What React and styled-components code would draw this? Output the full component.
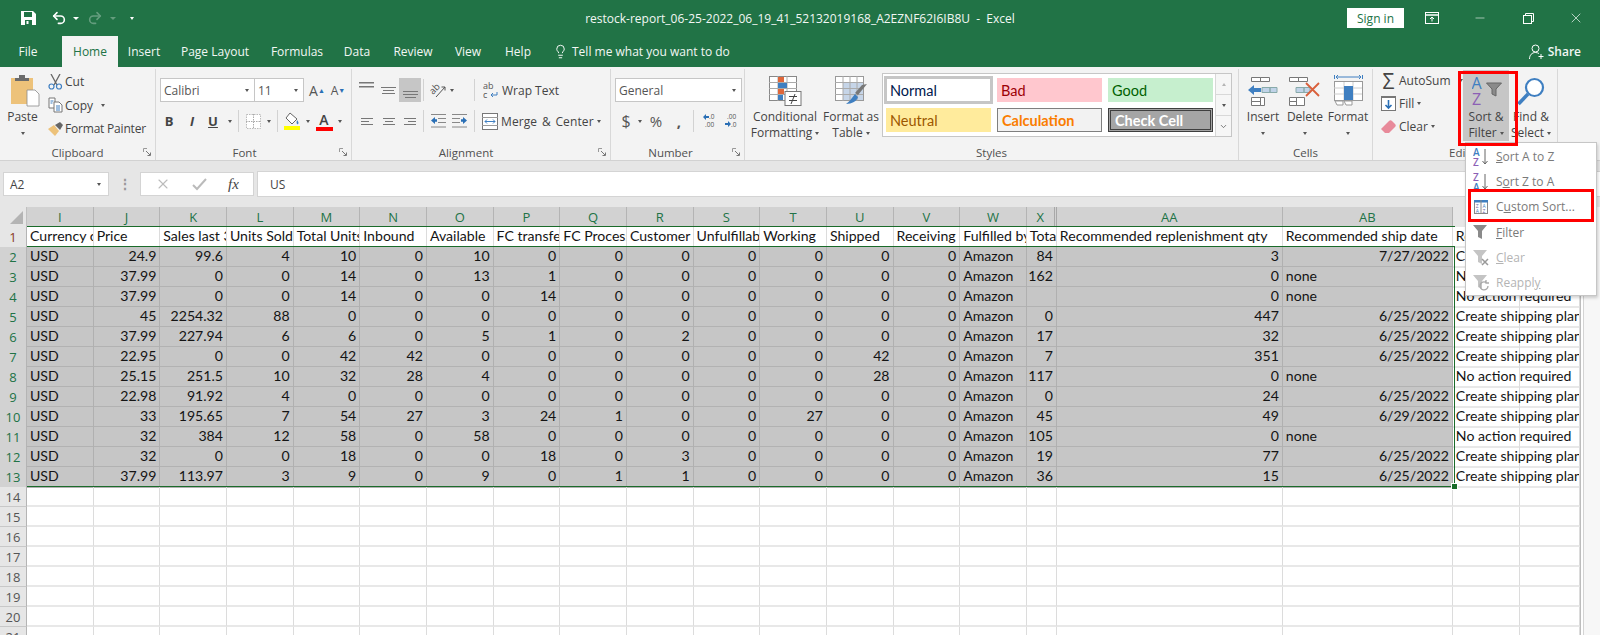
import React from "react";
import styled, { createGlobalStyle } from "styled-components";
import { Undo2, Redo2, Lightbulb, X, Minus, ChevronDown } from "lucide-react";

const UI_FONT = "'Open Sans', 'Noto Sans', sans-serif";
const CELL_FONT = "Lato, 'Open Sans', sans-serif";
const GREEN = "#217346";
const SELECT_GREEN = "#1a6b2a";

const GlobalStyle = createGlobalStyle`
  html, body { margin: 0; padding: 0; background: #fff; overflow: hidden; }
  body { font-family: ${UI_FONT}; }
`;

const Page = styled.div`
  position: relative;
  width: 1600px;
  height: 635px;
  overflow: hidden;
`;

/* title bar */
const TitleBar = styled.div`
  display: grid;
  grid-template-columns: 1fr auto 1fr;
  align-items: center;
  height: 36px;
  background: ${GREEN};
  color: #fff;
`;
const Qat = styled.div`
  display: flex;
  align-items: center;
  padding-left: 21px;
`;
const QatSlot = styled.div`
  display: flex;
  justify-content: center;
  align-items: center;
  width: ${(p) => p.$w}px;
  margin-left: ${(p) => p.$ml || 0}px;
  opacity: ${(p) => (p.$dim ? 0.3 : 1)};
`;
const DocTitle = styled.div`
  font-size: 12px;
  white-space: nowrap;
  color: #f2f7f4;
`;
const WindowControls = styled.div`
  display: flex;
  justify-content: flex-end;
  align-items: center;
`;
const SignIn = styled.div`
  display: flex;
  align-items: center;
  justify-content: center;
  width: 57px;
  height: 20px;
  background: #fff;
  color: ${GREEN};
  font-size: 12px;
`;
const WinButton = styled.div`
  display: flex;
  justify-content: center;
  width: 48px;
  margin-left: ${(p) => p.$ml || 0}px;
`;

/* tabs */
const TabBar = styled.div`
  display: flex;
  height: 31px;
  background: ${GREEN};
  color: #f2f7f4;
  font-size: 12px;
`;
const Tab = styled.div`
  display: flex;
  align-items: center;
  justify-content: center;
  width: ${(p) => p.$w}px;
  margin-left: ${(p) => p.$ml || 0}px;
  ${(p) => p.$active && `background: #f3f3f3; color: ${GREEN};`}
`;
const TellMe = styled.div`
  display: flex;
  align-items: center;
  gap: 4px;
  margin-left: 7px;
`;
const Share = styled.div`
  display: flex;
  align-items: center;
  gap: 3px;
  margin-left: auto;
  padding-right: 19px;
  font-weight: 600;
  font-size: 12px;
`;

/* ribbon */
const Ribbon = styled.div`
  display: flex;
  height: 93px;
  background: #f3f3f3;
  border-bottom: 1px solid #d2d2d2;
  box-sizing: content-box;
  color: #444;
  font-size: 12px;
`;
const Group = styled.div`
  position: relative;
  display: flex;
  flex-direction: column;
  width: ${(p) => p.$w}px;
  height: 91px;
  margin-top: 2px;
  border-right: 1px solid #d8d8d8;
  box-sizing: border-box;
`;
const GroupBody = styled.div`
  flex: 1;
  display: flex;
  padding-left: ${(p) => p.$pl || 0}px;
  margin-top: -2px;
`;
const GroupLabel = styled.div`
  display: flex;
  align-items: center;
  justify-content: ${(p) => (p.$pl ? "flex-start" : "center")};
  height: 16px;
  padding-left: ${(p) => p.$pl || 0}px;
  padding-right: ${(p) => p.$pr || 0}px;
  font-size: 11.5px;
  color: #505050;
`;
const Launcher = styled.svg`
  position: absolute;
  right: 3px;
  bottom: 3px;
  width: 9px;
  height: 9px;
`;
const LargeButton = styled.div`
  display: flex;
  flex-direction: column;
  align-items: center;
  width: ${(p) => p.$w}px;
  height: 71px;
  margin-top: 3px;
  margin-left: ${(p) => p.$ml || 0}px;
  padding-top: 3px;
  box-sizing: border-box;
  line-height: 16px;
  white-space: nowrap;
  background: ${(p) => (p.$active ? "#c6c6c6" : "transparent")};
`;
const LargeIcon = styled.div`
  display: flex;
  align-items: center;
  justify-content: center;
  height: 36px;
  padding-left: ${(p) => p.$pl || 0}px;
`;
const Caret = styled.span`
  display: inline-block;
  flex: none;
  width: 0;
  height: 0;
  margin-left: ${(p) => p.$ml ?? 3}px;
  vertical-align: middle;
  border-left: ${(p) => (p.$big ? 3.5 : 2.5)}px solid transparent;
  border-right: ${(p) => (p.$big ? 3.5 : 2.5)}px solid transparent;
  border-top: ${(p) => (p.$big ? 3.5 : 3)}px solid ${(p) => p.$color || "#555"};
  transform: ${(p) => (p.$up ? "rotate(180deg)" : "none")};
  opacity: ${(p) => (p.$up ? 0.4 : 1)};
`;
const CaretLine = styled.div`
  display: flex;
  align-items: center;
  height: 16px;
`;
const SmallColumn = styled.div`
  display: flex;
  flex-direction: column;
  width: ${(p) => p.$w}px;
  padding-top: ${(p) => p.$pt || 0}px;
  padding-left: ${(p) => p.$pl || 0}px;
  box-sizing: border-box;
`;
const SmallItem = styled.div`
  display: flex;
  align-items: center;
  height: ${(p) => p.$h || 23.5}px;
  white-space: nowrap;
  letter-spacing: ${(p) => (p.$tight ? "-0.2px" : "0")};
`;
const ItemIcon = styled.div`
  display: flex;
  justify-content: center;
  align-items: center;
  width: ${(p) => p.$w || 16}px;
  margin-right: ${(p) => p.$mr ?? 2}px;
`;
const ToolRows = styled.div`
  display: flex;
  flex-direction: column;
  gap: 7px;
  padding-top: 11px;
`;
const ToolRow = styled.div`
  display: flex;
  align-items: center;
  height: 24px;
`;
const Slot = styled.div`
  display: flex;
  flex-direction: ${(p) => (p.$stack ? "column" : "row")};
  align-items: ${(p) => (p.$stack ? "center" : p.$valign || "center")};
  justify-content: ${(p) => (p.$left ? "flex-start" : "center")};
  flex: none;
  width: ${(p) => p.$w}px;
  height: 24px;
  padding: ${(p) => (p.$valign === "flex-start" ? "4px 0 0" : p.$valign === "flex-end" ? "0 0 4px" : "0")};
  box-sizing: border-box;
  margin-left: ${(p) => p.$ml || 0}px;
  white-space: nowrap;
  word-spacing: ${(p) => (p.$spread ? "1.5px" : "0")};
  letter-spacing: ${(p) => (p.$spread ? "0.1px" : "0")};
  background: ${(p) => (p.$on ? "#c6c6c6" : "transparent")};
`;
const Divider = styled.div`
  flex: none;
  width: 1px;
  height: 22px;
  margin-left: ${(p) => p.$ml || 0}px;
  background: #d2d2d2;
`;
const SelectBox = styled.div`
  display: flex;
  align-items: center;
  justify-content: space-between;
  flex: none;
  width: ${(p) => p.$w}px;
  height: 24px;
  padding: 0 5px 0 3px;
  box-sizing: border-box;
  background: #fff;
  border: 1px solid #c6c6c6;
  margin-left: ${(p) => p.$ml || 0}px;
  color: #555;
  font-size: 12px;
`;
const Glyph = styled.span`
  font-size: ${(p) => p.$size || 13}px;
  line-height: ${(p) => (p.$lh ? p.$lh + "px" : "normal")};
  color: ${(p) => p.$color || "#444"};
  font-weight: ${(p) => p.$weight || 400};
  font-style: ${(p) => (p.$italic ? "italic" : "normal")};
  text-decoration: ${(p) => (p.$under ? "underline" : "none")};
  font-family: ${(p) => (p.$serif ? "'Liberation Serif', serif" : UI_FONT)};
`;

/* style gallery */
const Gallery = styled.div`
  display: flex;
  width: 350px;
  height: 64px;
  margin: 6px 0 0 5px;
  background: #fff;
  border: 1px solid #c6c6c6;
  box-sizing: border-box;
`;
const ChipGrid = styled.div`
  display: grid;
  grid-template-columns: repeat(3, 105px);
  grid-template-rows: repeat(2, 24px);
  gap: 6px;
  padding: 4px 0 0 3px;
`;
const CHIP = {
  normal: "background:#fff;color:#00184d;outline:3px solid #c6c6c6;outline-offset:-1px;",
  bad: "background:#ffc7ce;color:#9c0006;",
  good: "background:#c6efce;color:#006100;",
  neutral: "background:#ffeb9c;color:#9c5700;",
  calc: "background:#f2f2f2;color:#fa7d00;font-weight:700;border:1px solid #7f7f7f;",
  check: "background:#a5a5a5;color:#fff;font-weight:700;border:3px double #3f3f3f;",
};
const Chip = styled.div`
  display: flex;
  align-items: center;
  padding-left: 4px;
  box-sizing: border-box;
  font-family: ${CELL_FONT};
  font-size: 14.5px;
  white-space: nowrap;
  ${(p) => CHIP[p.$kind]}
`;
const GalleryScroll = styled.div`
  display: flex;
  flex-direction: column;
  width: 15px;
  margin-left: auto;
  border-left: 1px solid #d8d8d8;
  background: #f6f6f6;
`;
const ScrollStep = styled.div`
  flex: 1;
  display: flex;
  align-items: center;
  justify-content: center;
  border-bottom: 1px solid #d8d8d8;
  &:last-child { border-bottom: 0; }
`;

/* formula bar */
const FormulaBar = styled.div`
  display: flex;
  align-items: center;
  height: 46px;
  padding: 0 0 0 3px;
  background: #e6e6e6;
  box-sizing: border-box;
  color: #444;
`;
const NameBox = styled.div`
  display: flex;
  align-items: center;
  justify-content: space-between;
  width: 106px;
  height: 24px;
  padding: 0 7px 0 6px;
  box-sizing: border-box;
  background: #fff;
  border: 1px solid #d4d4d4;
  font-size: 12px;
`;
const GripDots = styled.div`
  width: 31px;
  text-align: center;
  color: #999;
  font-size: 14px;
  font-weight: 700;
  line-height: 1;
`;
const FxBox = styled.div`
  display: flex;
  align-items: center;
  justify-content: space-around;
  width: 114px;
  height: 24px;
  padding: 0 4px;
  box-sizing: border-box;
  background: #fff;
  border: 1px solid #d4d4d4;
`;
const FormulaInput = styled.div`
  flex: 1;
  display: flex;
  align-items: center;
  height: 24px;
  margin-left: 3px;
  padding-left: 12px;
  background: #fff;
  border: 1px solid #d4d4d4;
  border-right: 0;
  font-size: 12px;
`;

/* sheet */
const SheetArea = styled.div`
  display: flex;
  height: 429px;
  overflow: hidden;
`;
const SheetGrid = styled.div`
  position: relative;
  width: 1580px;
  flex: none;
  overflow: hidden;
`;
const COLUMNS = "27px repeat(15, 66.667px) 30px 226px 170px 67px 60px";
const SheetRow = styled.div`
  display: grid;
  grid-template-columns: ${COLUMNS};
  height: 20px;
  box-sizing: border-box;
`;
const ColHead = styled.div`
  display: flex;
  align-items: center;
  justify-content: center;
  box-sizing: border-box;
  font-size: 13px;
  background: ${(p) => (p.$sel ? "#d2d2d2" : "#e6e6e6")};
  color: ${(p) => (p.$sel ? GREEN : "#555")};
  border-right: ${(p) => (p.$hiddenNext ? "3px double #a8a8a8" : "1px solid " + (p.$sel ? "#b4b4b4" : "#c8c8c8"))};
`;
const CornerHead = styled.div`
  display: flex;
  align-items: flex-end;
  justify-content: flex-end;
  padding: 0 3px 3px 0;
  box-sizing: border-box;
  background: #e6e6e6;
  border-right: 1px solid #c0c0c0;
`;
const RowHead = styled.div`
  display: flex;
  align-items: center;
  justify-content: center;
  font-size: 13px;
  box-sizing: border-box;
  background: ${(p) => (p.$sel ? "#d2d2d2" : "#e6e6e6")};
  color: ${(p) => (p.$sel ? GREEN : p.$first ? "#8a3a1a" : "#555")};
  border-bottom: 1px solid ${(p) => (p.$sel ? "#b4b4b4" : "#c8c8c8")};
  border-right: 1px solid #b4b4b4;
`;
const Cell = styled.div`
  display: flex;
  align-items: center;
  justify-content: ${(p) => (p.$right ? "flex-end" : "flex-start")};
  padding: 0 3px 2px;
  box-sizing: border-box;
  min-width: 0;
  font-family: ${CELL_FONT};
  font-size: 14.1px;
  color: #141414;
  white-space: nowrap;
  overflow: ${(p) => (p.$spill ? "visible" : "hidden")};
  background: ${(p) => (p.$sel ? "#c6c6c6" : "transparent")};
  border-right: 1px solid ${(p) => (p.$sel ? "#b0b0b0" : "#dcdcdc")};
  border-bottom: 2px solid ${(p) => (p.$sel ? "#b2b2b2" : "#e8e8e8")};
`;
const HeaderOutline = styled.div`
  position: absolute;
  left: 27px;
  top: 19px;
  width: 1428px;
  height: 21px;
  border-top: 1.5px solid ${SELECT_GREEN};
  border-bottom: 1.5px solid ${SELECT_GREEN};
  box-sizing: border-box;
  pointer-events: none;
`;
const SelectionOutline = styled.div`
  position: absolute;
  left: 27px;
  top: 39px;
  width: 1428px;
  height: 241px;
  border-right: 1.5px solid ${SELECT_GREEN};
  border-bottom: 1.5px solid ${SELECT_GREEN};
  box-sizing: border-box;
  pointer-events: none;
`;
const FillHandle = styled.div`
  position: absolute;
  left: 1451px;
  top: 276px;
  width: 5px;
  height: 5px;
  background: ${SELECT_GREEN};
  border: 1px solid #fff;
  box-sizing: content-box;
`;
const Gutter = styled.div`
  flex: 1;
  background: #f7f7f7;
  border-left: 1px solid #bdbdbd;
  box-shadow: inset 2px 0 0 #fff, inset 3px 0 0 #d4d4d4;
`;

/* dropdown */
const Menu = styled.div`
  position: absolute;
  left: 1465px;
  top: 142px;
  width: 132px;
  height: 154px;
  padding-top: 1px;
  box-sizing: border-box;
  background: #fff;
  border: 1px solid #c6c6c6;
  box-shadow: 1px 2px 3px rgba(0,0,0,.18);
`;
const MenuItem = styled.div`
  display: flex;
  align-items: center;
  height: 25.2px;
  font-size: 12px;
  color: ${(p) => (p.$off ? "#b4b4b4" : "#7a7a7a")};
`;
const MenuIcon = styled.div`
  display: flex;
  justify-content: center;
  width: 30px;
  flex: none;
`;
const Mnemonic = styled.span`
  text-decoration: underline;
`;
const RedBox = styled.div`
  position: absolute;
  left: ${(p) => p.$x}px;
  top: ${(p) => p.$y}px;
  width: ${(p) => p.$w}px;
  height: ${(p) => p.$h}px;
  border: 3px solid #f00;
  box-sizing: border-box;
  pointer-events: none;
`;

/* drawings */
const SaveIcon = () => (
  <svg width="15" height="14" viewBox="0 0 15 14">
    <path d="M0 0h12l3 3v11H0z" fill="#fff" />
    <rect x="3" y="1" width="8" height="5" fill={GREEN} />
    <rect x="4" y="9" width="7" height="5" fill={GREEN} />
    <rect x="5.5" y="10" width="2" height="3" fill="#fff" />
  </svg>
);
const PasteIcon = () => (
  <svg width="29" height="32" viewBox="0 0 29 32">
    <rect x="0" y="3" width="22" height="26" fill="#edc27a" />
    <path d="M4 6V3h4V0h6v3h4v3z" fill="#6b6b6b" />
    <path d="M16 15h8l4 4v12H16z" fill="#fff" stroke="#8a8a8a" strokeWidth=".8" />
  </svg>
);
const CutIcon = () => (
  <svg width="15" height="16" viewBox="0 0 15 16">
    <path d="M3 0l6 11M12 0L6 11" stroke="#666" strokeWidth="1.3" fill="none" />
    <circle cx="3.5" cy="12.5" r="2.5" fill="none" stroke="#3f7fc1" strokeWidth="1.2" />
    <circle cx="11" cy="12.5" r="2.5" fill="none" stroke="#3f7fc1" strokeWidth="1.2" />
  </svg>
);
const CopyIcon = () => (
  <svg width="15" height="16" viewBox="0 0 15 16">
    <path d="M1 1h6v10H1z" fill="#fff" stroke="#777" />
    <path d="M6 5h5l3 3v7H6z" fill="#fff" stroke="#777" />
    <path d="M2.5 4h3M2.5 6h2M8 9h4M8 11h4M8 13h4" stroke="#3f7fc1" />
  </svg>
);
const PainterIcon = () => (
  <svg width="15" height="14" viewBox="0 0 15 14">
    <path d="M0 7l6-4 5 6-4 5z" fill="#edc27a" />
    <path d="M7 3l5-3 3 3-3 5z" fill="#666" />
  </svg>
);
const Launch = () => (
  <Launcher viewBox="0 0 9 9">
    <path d="M.5 4V.5H4" fill="none" stroke="#999" />
    <path d="M3 3l4 4M7.5 4.5v3h-3" fill="none" stroke="#777" />
  </Launcher>
);
const Lines = ({ w, dy = 3, n = 3, align = "left", width = 15, color = "#777", thick = 1 }) => (
  <svg width={width} height={dy * (n - 1) + thick} viewBox={`0 0 ${width} ${dy * (n - 1) + thick}`}>
    {Array.from({ length: n }, (_, i) => {
      const len = w[i % w.length];
      const x0 = align === "left" ? 0 : align === "right" ? width - len : (width - len) / 2;
      return <rect key={i} x={x0} y={i * dy} width={len} height={thick} fill={color} />;
    })}
  </svg>
);
const BorderIcon = () => (
  <svg width="15" height="15" viewBox="0 0 15 15">
    <rect x=".5" y=".5" width="14" height="14" fill="#fff" stroke="#bbb" strokeDasharray="1.5 1" />
    <path d="M7.5 0v15M0 7.5h15" stroke="#aaa" strokeDasharray="1.5 1" />
  </svg>
);
const FillIcon = () => (
  <svg width="17" height="18" viewBox="0 0 17 18">
    <path d="M6 1l7 6-5 5-6-6z" fill="#fff" stroke="#666" />
    <path d="M13 8c1.500 2 2 3 1 4s-2-1-1-4z" fill="#3f7fc1" />
    <rect x="0" y="14" width="16" height="4" fill="#ff0" />
  </svg>
);
const OrientIcon = () => (
  <svg width="17" height="18" viewBox="0 0 17 18">
    <text x="0" y="11" fontSize="9.5" fontFamily="Open Sans" fill="#555" transform="rotate(-45 5 9)">ab</text>
    <path d="M6 16L15 6M11.500 6H15v3.500" stroke="#555" fill="none" />
  </svg>
);
const IndentIcon = ({ flip }) => (
  <svg width="15" height="14" viewBox="0 0 15 14">
    <g transform={flip ? "matrix(-1 0 0 1 15 0)" : undefined}>
      <path d="M0 .5h15M7 4.500h8M7 8.500h8M0 13h15" stroke="#888" />
      <path d="M0 6.500l4-3.500v2.200h2v2.600H4V10z" fill="#2a6fb5" />
    </g>
  </svg>
);
const WrapIcon = () => (
  <svg width="16" height="18" viewBox="0 0 16 18">
    <text x="0" y="8" fontSize="9" fontFamily="Open Sans" fill="#555">ab</text>
    <text x="0" y="17" fontSize="9" fontFamily="Open Sans" fill="#555">c</text>
    <path d="M14 11v3H8M10 12l-2 2 2 2" stroke="#3f7fc1" fill="none" />
  </svg>
);
const MergeIcon = () => (
  <svg width="16" height="17" viewBox="0 0 16 17">
    <rect x=".5" y=".5" width="15" height="16" fill="#fff" stroke="#777" />
    <path d="M0 4.500h16M0 12.500h16" stroke="#999" />
    <path d="M3 8.500h10M5 6.500l-2 2 2 2M11 6.500l2 2-2 2" stroke="#3f7fc1" fill="none" />
  </svg>
);
const DecimalIcon = ({ more }) => (
  <svg width="15" height="16" viewBox="0 0 15 16">
    <text x={more ? 6 : 3} y="6" fontSize="6.500" fontFamily="Open Sans" fill="#555">{more ? ".0" : ".00"}</text>
    <text x={more ? 2 : 7} y="14" fontSize="6.500" fontFamily="Open Sans" fill="#555">{more ? ".00" : ".0"}</text>
    {more
      ? <path d="M0 4l3-3v2h3v2H3v2z" fill="#2a6fb5" />
      : <path d="M7 11L4 8v2H1v2h3v2z" fill="#2a6fb5" />}
  </svg>
);
const CondIcon = () => (
  <svg width="33" height="30" viewBox="0 0 33 30">
    <rect x=".5" y=".5" width="27" height="24" fill="#fff" stroke="#888" />
    <path d="M0 6.500h28M0 12.500h28M0 18.500h28M9 0v25M18 0v25" stroke="#aaa" />
    <rect x="9" y="1" width="6" height="5" fill="#e0673a" />
    <rect x="9" y="7" width="9" height="5" fill="#3f7fc1" />
    <rect x="9" y="13" width="6" height="5" fill="#e0673a" />
    <rect x="9" y="19" width="5" height="5" fill="#3f7fc1" />
    <rect x="16" y="15.500" width="16" height="14" fill="#fff" stroke="#777" />
    <path d="M20 20.500h8M20 24.500h8M26 18l-4 10" stroke="#444" fill="none" />
  </svg>
);
const TableIcon = () => (
  <svg width="33" height="30" viewBox="0 0 33 30">
    <rect x=".5" y=".5" width="28" height="24" fill="#fff" stroke="#999" />
    <rect x="8" y="7" width="20" height="17" fill="#c6d5e8" />
    <path d="M0 6.500h28M0 12.500h28M0 18.500h28M8 0v25M15 0v25M22 0v25" stroke="#aaa" />
    <path d="M32 8l-9 11-3-2 7-8z" fill="#777" />
    <path d="M20 18l3 3c-1 4-6 7-12 7 3-2 5-5 9-10z" fill="#3f7fc1" />
  </svg>
);
const InsertIcon = () => (
  <svg width="31" height="30" viewBox="0 0 31 30">
    <path d="M3.500 1.500h9v4h-9zM12.500 1.500h9v4h-9zM3.500 21.500h9v4h-9zM3.500 25.500h9v4h-9zM12.500 21.500h4v8h-4z" fill="#fff" stroke="#777" />
    <path d="M14 11.500h8v5h-8zM22 11.500h7v5h-7z" fill="#c0d3e8" stroke="#8aa" />
    <path d="M0 14l6-5v3h7v4H6v3z" fill="#3f7fc1" />
  </svg>
);
const DeleteIcon = () => (
  <svg width="33" height="30" viewBox="0 0 33 30">
    <path d="M.5 1.500h9v4h-9zM9.500 1.500h9v4h-9zM.5 21.500h7v4h-7zM.5 25.500h7v4h-7zM7.500 21.500h8v8h-8z" fill="#fff" stroke="#777" />
    <path d="M7 11.500h8v5H7zM15 11.500h6v5h-6z" fill="#c0d3e8" stroke="#8aa" />
    <path d="M17 7l13 13M30 7L17 20" stroke="#d9603b" strokeWidth="1.800" />
  </svg>
);
const FormatIcon = () => (
  <svg width="29" height="32" viewBox="0 0 29 32">
    <path d="M.5 0v4M28.500 0v4M2 2h25" stroke="#3f7fc1" />
    <path d="M4 0l-2 2 2 2M25 0l2 2-2 2" stroke="#3f7fc1" fill="none" />
    <rect x=".5" y="6.500" width="28" height="19" fill="#fff" stroke="#999" />
    <path d="M10 7v18M19 7v18M0 13h28M0 19h28" stroke="#ccc" />
    <rect x="10" y="11" width="9" height="14" fill="#3f7fc1" />
    <path d="M1 26h8v4H3zM10 26h8v4h-6z" fill="#fff" stroke="#999" />
  </svg>
);
const FillDownIcon = () => (
  <svg width="15" height="15" viewBox="0 0 15 15">
    <rect x=".5" y=".5" width="14" height="14" fill="#fff" stroke="#777" />
    <rect x="0" y="0" width="15" height="2" fill="#777" />
    <path d="M7.500 4v8M4.500 9l3 3 3-3" stroke="#2a6fb5" strokeWidth="1.600" fill="none" />
  </svg>
);
const EraserIcon = () => (
  <svg width="15" height="14" viewBox="0 0 15 14">
    <path d="M0 9l8-8c1-1 2-1 3 0l3 3c1 1 1 2 0 3l-6 6H4z" fill="#e88a9a" />
  </svg>
);
const SortFilterIcon = () => (
  <svg width="30" height="28" viewBox="0 0 30 28">
    <text x="-.5" y="12" fontSize="16" fontFamily="Open Sans" fill="#3f7fc1">A</text>
    <text x="0" y="27.500" fontSize="16" fontFamily="Open Sans" fill="#8c5fb5">Z</text>
    <path d="M14.500 6h15l-5.500 6v7l-4-2v-5z" fill="#8a8a8a" stroke="#666" />
  </svg>
);
const FindIcon = () => (
  <svg width="28" height="29" viewBox="0 0 28 29">
    <circle cx="17.500" cy="10.500" r="8.500" fill="#fff" stroke="#3f7fc1" strokeWidth="2.200" />
    <path d="M11 17L1.500 27" stroke="#3f7fc1" strokeWidth="3.500" />
  </svg>
);
const SortArrowIcon = ({ first }) => {
  const blue = "#3f7fc1";
  const purple = "#8c5fb5";
  return (
    <svg width="16" height="18" viewBox="0 0 16 18">
      <text x="0" y="8" fontSize="10" fontWeight="600" fontFamily="Open Sans" fill={first === "A" ? blue : purple}>{first}</text>
      <text x="0" y="17.500" fontSize="10" fontWeight="600" fontFamily="Open Sans" fill={first === "A" ? purple : blue}>{first === "A" ? "Z" : "A"}</text>
      <path d="M12 1v15M9.500 13l2.500 3 2.500-3" stroke="#666" fill="none" />
    </svg>
  );
};
const CustomSortIcon = () => (
  <svg width="14" height="14" viewBox="0 0 14 14">
    <rect x=".5" y=".5" width="13" height="13" fill="#fff" stroke="#888" />
    <rect x="0" y="0" width="14" height="2.500" fill="#3f7fc1" />
    <path d="M7 0v14" stroke="#888" />
    <text x="1.800" y="7.500" fontSize="5" fontFamily="Open Sans" fill="#6b5fa5">Z</text>
    <text x="1.800" y="12.500" fontSize="5" fontFamily="Open Sans" fill="#3f7fc1">A</text>
    <text x="8.500" y="7.500" fontSize="5" fontFamily="Open Sans" fill="#3f7fc1">A</text>
    <text x="8.500" y="12.500" fontSize="5" fontFamily="Open Sans" fill="#6b5fa5">Z</text>
  </svg>
);
const MenuFunnel = ({ color = "#8a8a8a", mark }) => (
  <svg width="18" height="17" viewBox="0 0 18 17">
    <path d="M1 1h14L10 7v8l-4-2V7z" fill={color} />
    {mark === "x" && <path d="M10 10l6 6M16 10l-6 6" stroke="#999" strokeWidth="1.500" />}
    {mark === "r" && <path d="M16 12a4 4 0 1 1-2-3.500M14 6v3h3" stroke="#aaa" fill="none" strokeWidth="1.300" />}
  </svg>
);
const DisplayIcon = () => (
  <svg width="14" height="12" viewBox="0 0 14 12">
    <rect x=".5" y=".5" width="13" height="11" fill="none" stroke="#fff" />
    <path d="M0 3h14" stroke="#fff" strokeWidth="1.500" />
    <path d="M7 9.500V5M5 7l2-2 2 2" stroke="#fff" fill="none" />
  </svg>
);
const RestoreIcon = () => (
  <svg width="11" height="11" viewBox="0 0 11 11">
    <rect x=".5" y="2.500" width="8" height="8" fill="none" stroke="#fff" />
    <path d="M2.500 2.500V.5h8v8h-2" fill="none" stroke="#fff" />
  </svg>
);
const ShareIcon = () => (
  <svg width="16" height="16" viewBox="0 0 16 16">
    <circle cx="6.500" cy="4.500" r="3.500" fill="none" stroke="#fff" />
    <path d="M.5 15c0-4 2.500-6.500 6-6.500 1.500 0 2.500.5 3.500 1M12 10v5M9.500 12.500h5" fill="none" stroke="#fff" />
  </svg>
);

/* data */
const COL_LETTERS = ["I", "J", "K", "L", "M", "N", "O", "P", "Q", "R", "S", "T", "U", "V", "W", "X", "AA", "AB", "", ""];
const HEADERS = ["Currency code", "Price", "Sales last 30 days", "Units Sold", "Total Units", "Inbound", "Available", "FC transfer", "FC Processing", "Customer", "Unfulfillable", "Working", "Shipped", "Receiving", "Fulfilled by", "Total", "Recommended replenishment qty", "Recommended ship date", "Recommended action", ""];
const CREATE = "Create shipping plan";
const NOACT = "No action required";
const ROWS = [
  ["USD", 24.9, 99.6, 4, 10, 0, 10, 0, 0, 0, 0, 0, 0, 0, "Amazon", 84, 3, "7/27/2022", CREATE],
  ["USD", 37.99, 0, 0, 14, 0, 13, 1, 0, 0, 0, 0, 0, 0, "Amazon", 162, 0, "none", NOACT],
  ["USD", 37.99, 0, 0, 14, 0, 0, 14, 0, 0, 0, 0, 0, 0, "Amazon", "", 0, "none", NOACT],
  ["USD", 45, 2254.32, 88, 0, 0, 0, 0, 0, 0, 0, 0, 0, 0, "Amazon", 0, 447, "6/25/2022", CREATE],
  ["USD", 37.99, 227.94, 6, 6, 0, 5, 1, 0, 2, 0, 0, 0, 0, "Amazon", 17, 32, "6/25/2022", CREATE],
  ["USD", 22.95, 0, 0, 42, 42, 0, 0, 0, 0, 0, 0, 42, 0, "Amazon", 7, 351, "6/25/2022", CREATE],
  ["USD", 25.15, 251.5, 10, 32, 28, 4, 0, 0, 0, 0, 0, 28, 0, "Amazon", 117, 0, "none", NOACT],
  ["USD", 22.98, 91.92, 4, 0, 0, 0, 0, 0, 0, 0, 0, 0, 0, "Amazon", 0, 24, "6/25/2022", CREATE],
  ["USD", 33, 195.65, 7, 54, 27, 3, 24, 1, 0, 0, 27, 0, 0, "Amazon", 45, 49, "6/29/2022", CREATE],
  ["USD", 32, 384, 12, 58, 0, 58, 0, 0, 0, 0, 0, 0, 0, "Amazon", 105, 0, "none", NOACT],
  ["USD", 32, 0, 0, 18, 0, 0, 18, 0, 3, 0, 0, 0, 0, "Amazon", 19, 77, "6/25/2022", CREATE],
  ["USD", 37.99, 113.97, 3, 9, 0, 9, 0, 1, 1, 0, 0, 0, 0, "Amazon", 36, 15, "6/25/2022", CREATE],
];
const EMPTY_ROWS = [14, 15, 16, 17, 18, 19, 20, 21];
const SELECTED_COLS = 18;
const X_INDEX = 15;
const TABS = [
  { name: "File", w: 56 },
  { name: "Home", w: 56, ml: 6, active: true },
  { name: "Insert", w: 52 },
  { name: "Page Layout", w: 90 },
  { name: "Formulas", w: 74 },
  { name: "Data", w: 46 },
  { name: "Review", w: 66 },
  { name: "View", w: 44 },
  { name: "Help", w: 56 },
];

function TitleRow() {
  return (
    <TitleBar>
      <Qat>
        <QatSlot $w={15}><SaveIcon /></QatSlot>
        <QatSlot $w={16} $ml={15}><Undo2 size={18} color="#fff" strokeWidth={2.4} /></QatSlot>
        <QatSlot $w={7} $ml={5}><Caret $ml={0} $big $color="#fff" /></QatSlot>
        <QatSlot $w={16} $ml={8} $dim><Redo2 size={18} color="#fff" strokeWidth={2.4} /></QatSlot>
        <QatSlot $w={7} $ml={6} $dim><Caret $ml={0} $big $color="#fff" /></QatSlot>
        <QatSlot $w={6} $ml={13}><Caret $ml={0} $color="#fff" /></QatSlot>
      </Qat>
      <DocTitle>restock-report_06-25-2022_06_19_41_52132019168_A2EZNF62I6IB8U&nbsp; - &nbsp;Excel</DocTitle>
      <WindowControls>
        <SignIn>Sign in</SignIn>
        <WinButton $ml={4}><DisplayIcon /></WinButton>
        <WinButton><Minus size={14} color="#fff" strokeWidth={1} /></WinButton>
        <WinButton><RestoreIcon /></WinButton>
        <WinButton><X size={16} color="#fff" strokeWidth={1} /></WinButton>
      </WindowControls>
    </TitleBar>
  );
}

function Tabs() {
  return (
    <TabBar>
      {TABS.map((t) => <Tab key={t.name} $w={t.w} $ml={t.ml} $active={t.active}>{t.name}</Tab>)}
      <TellMe>
        <Lightbulb size={15} color="#fff" strokeWidth={1.5} />
        Tell me what you want to do
      </TellMe>
      <Share><ShareIcon /> Share</Share>
    </TabBar>
  );
}

function RibbonBar() {
  return (
    <Ribbon>
      <Group $w={156}>
        <GroupBody>
          <LargeButton $w={45}>
            <LargeIcon $pl={5}><PasteIcon /></LargeIcon>
            <CaretLine>Paste</CaretLine>
            <CaretLine><Caret $ml={0} /></CaretLine>
          </LargeButton>
          <SmallColumn $w={108} $pt={3} $pl={2}>
            <SmallItem><ItemIcon><CutIcon /></ItemIcon>Cut</SmallItem>
            <SmallItem><ItemIcon><CopyIcon /></ItemIcon>Copy <Caret $ml={8} /></SmallItem>
            <SmallItem $tight><ItemIcon><PainterIcon /></ItemIcon>Format Painter</SmallItem>
          </SmallColumn>
        </GroupBody>
        <GroupLabel>Clipboard</GroupLabel>
        <Launch />
      </Group>

      <Group $w={196}>
        <GroupBody $pl={4}>
          <ToolRows>
            <ToolRow>
              <SelectBox $w={95}>Calibri<Caret /></SelectBox>
              <SelectBox $w={50} $ml={-1}>11<Caret /></SelectBox>
              <Slot $w={18} $ml={4}><Glyph $size={14} $color="#555">A</Glyph><Glyph $size={7} $color="#2a6fb5">▲</Glyph></Slot>
              <Slot $w={18} $ml={3}><Glyph $size={12} $color="#555">A</Glyph><Glyph $size={7} $color="#2a6fb5">▼</Glyph></Slot>
            </ToolRow>
            <ToolRow>
              <Slot $w={18}><Glyph $weight={700}>B</Glyph></Slot>
              <Slot $w={18} $ml={5}><Glyph $italic $weight={700}>I</Glyph></Slot>
              <Slot $w={18} $ml={3}><Glyph $under $weight={700}>U</Glyph></Slot>
              <Slot $w={10} $ml={3}><Caret $ml={0} /></Slot>
              <Divider $ml={3} />
              <Slot $w={18} $ml={5}><BorderIcon /></Slot>
              <Slot $w={10} $ml={2}><Caret $ml={0} /></Slot>
              <Divider $ml={3} />
              <Slot $w={17} $ml={6}><FillIcon /></Slot>
              <Slot $w={10} $ml={2}><Caret $ml={0} /></Slot>
              <Slot $w={18} $ml={2} $stack>
                <Glyph $size={14} $weight={600} $lh={15}>A</Glyph>
                <svg width="17" height="4"><rect width="17" height="4" fill="#f00" /></svg>
              </Slot>
              <Slot $w={10} $ml={2}><Caret $ml={0} /></Slot>
            </ToolRow>
          </ToolRows>
        </GroupBody>
        <GroupLabel $pr={18}>Font</GroupLabel>
        <Launch />
      </Group>

      <Group $w={259}>
        <GroupBody $pl={7}>
          <ToolRows>
            <ToolRow>
              <Slot $w={15} $valign="flex-start"><Lines w={[15]} n={2} dy={4} thick={1.5} /></Slot>
              <Slot $w={15} $ml={7}><Lines w={[15, 11, 13]} align="center" /></Slot>
              <Slot $w={22} $ml={3} $on $valign="flex-end"><Lines w={[15, 15, 11]} align="center" /></Slot>
              <Divider $ml={2} />
              <Slot $w={17} $ml={6}><OrientIcon /></Slot>
              <Slot $w={8} $ml={1}><Caret $ml={0} /></Slot>
              <Divider $ml={18} />
              <Slot $w={16} $ml={8}><WrapIcon /></Slot>
              <Slot $w={70} $ml={3} $left>Wrap Text</Slot>
            </ToolRow>
            <ToolRow>
              <Slot $w={12} $ml={2}><Lines w={[12, 8, 12]} width={12} /></Slot>
              <Slot $w={12} $ml={10}><Lines w={[12, 8, 12]} width={12} align="center" /></Slot>
              <Slot $w={12} $ml={9}><Lines w={[12, 8, 12]} width={12} align="right" /></Slot>
              <Divider $ml={7} />
              <Slot $w={15} $ml={7}><IndentIcon /></Slot>
              <Slot $w={15} $ml={6}><IndentIcon flip /></Slot>
              <Divider $ml={7} />
              <Slot $w={16} $ml={7}><MergeIcon /></Slot>
              <Slot $w={95} $ml={3} $left $spread>Merge &amp; Center</Slot>
              <Caret $ml={1} />
            </ToolRow>
          </ToolRows>
        </GroupBody>
        <GroupLabel $pr={30}>Alignment</GroupLabel>
        <Launch />
      </Group>

      <Group $w={134}>
        <GroupBody $pl={4}>
          <ToolRows>
            <ToolRow>
              <SelectBox $w={127}>General<Caret /></SelectBox>
            </ToolRow>
            <ToolRow>
              <Slot $w={12} $ml={5}><Glyph $size={16} $color="#555">$</Glyph></Slot>
              <Slot $w={8} $ml={4}><Caret $ml={0} /></Slot>
              <Slot $w={16} $ml={4}><Glyph $size={15} $color="#555">%</Glyph></Slot>
              <Slot $w={10} $ml={10}><Glyph $size={15} $weight={700} $color="#555">,</Glyph></Slot>
              <Divider $ml={9} />
              <Slot $w={15} $ml={9}><DecimalIcon more /></Slot>
              <Slot $w={15} $ml={6}><DecimalIcon /></Slot>
            </ToolRow>
          </ToolRows>
        </GroupBody>
        <GroupLabel $pr={14}>Number</GroupLabel>
        <Launch />
      </Group>

      <Group $w={494}>
        <GroupBody>
          <LargeButton $w={80}>
            <LargeIcon><CondIcon /></LargeIcon>
            <CaretLine>Conditional</CaretLine>
            <CaretLine>Formatting<Caret /></CaretLine>
          </LargeButton>
          <LargeButton $w={52}>
            <LargeIcon><TableIcon /></LargeIcon>
            <CaretLine>Format as</CaretLine>
            <CaretLine>Table<Caret /></CaretLine>
          </LargeButton>
          <Gallery>
            <ChipGrid>
              <Chip $kind="normal">Normal</Chip>
              <Chip $kind="bad">Bad</Chip>
              <Chip $kind="good">Good</Chip>
              <Chip $kind="neutral">Neutral</Chip>
              <Chip $kind="calc">Calculation</Chip>
              <Chip $kind="check">Check Cell</Chip>
            </ChipGrid>
            <GalleryScroll>
              <ScrollStep><Caret $ml={0} $up /></ScrollStep>
              <ScrollStep><Caret $ml={0} /></ScrollStep>
              <ScrollStep><ChevronDown size={9} color="#555" /></ScrollStep>
            </GalleryScroll>
          </Gallery>
        </GroupBody>
        <GroupLabel>Styles</GroupLabel>
      </Group>

      <Group $w={134}>
        <GroupBody $pl={2}>
          <LargeButton $w={44}>
            <LargeIcon><InsertIcon /></LargeIcon>
            <CaretLine>Insert</CaretLine>
            <CaretLine><Caret $ml={0} /></CaretLine>
          </LargeButton>
          <LargeButton $w={40}>
            <LargeIcon><DeleteIcon /></LargeIcon>
            <CaretLine>Delete</CaretLine>
            <CaretLine><Caret $ml={0} /></CaretLine>
          </LargeButton>
          <LargeButton $w={46}>
            <LargeIcon><FormatIcon /></LargeIcon>
            <CaretLine>Format</CaretLine>
            <CaretLine><Caret $ml={0} /></CaretLine>
          </LargeButton>
        </GroupBody>
        <GroupLabel>Cells</GroupLabel>
      </Group>

      <Group $w={185}>
        <GroupBody>
          <SmallColumn $w={90} $pt={2} $pl={8}>
            <SmallItem $h={23}><ItemIcon $w={15} $mr={3}><Glyph $size={21} $lh={20} $color="#444">Σ</Glyph></ItemIcon>AutoSum<Caret $ml={8} /></SmallItem>
            <SmallItem $h={23}><ItemIcon $w={15} $mr={3}><FillDownIcon /></ItemIcon>Fill<Caret /></SmallItem>
            <SmallItem $h={23}><ItemIcon $w={15} $mr={3}><EraserIcon /></ItemIcon>Clear<Caret /></SmallItem>
          </SmallColumn>
          <LargeButton $w={46} $active>
            <LargeIcon $pl={1}><SortFilterIcon /></LargeIcon>
            <CaretLine>Sort &amp;</CaretLine>
            <CaretLine>Filter<Caret /></CaretLine>
          </LargeButton>
          <LargeButton $w={44}>
            <LargeIcon><FindIcon /></LargeIcon>
            <CaretLine>Find &amp;</CaretLine>
            <CaretLine>Select<Caret /></CaretLine>
          </LargeButton>
        </GroupBody>
        <GroupLabel $pl={76}>Editing</GroupLabel>
      </Group>
    </Ribbon>
  );
}

function Formula() {
  return (
    <FormulaBar>
      <NameBox>A2<Caret /></NameBox>
      <GripDots>⋮</GripDots>
      <FxBox>
        <X size={16} color="#bbb" strokeWidth={1.6} />
        <svg width="16" height="14" viewBox="0 0 16 14"><path d="M1 8l4 4 9-10" fill="none" stroke="#bbb" strokeWidth="2" /></svg>
        <Glyph $serif $italic $size={15}>fx</Glyph>
      </FxBox>
      <FormulaInput>US</FormulaInput>
    </FormulaBar>
  );
}

function Sheet() {
  return (
    <SheetArea>
      <SheetGrid>
        <SheetRow>
          <CornerHead>
            <svg width="13" height="13" viewBox="0 0 13 13"><path d="M13 0v13H0z" fill="#b4b4b4" /></svg>
          </CornerHead>
          {COL_LETTERS.map((c, i) => (
            <ColHead key={i} $sel={i < SELECTED_COLS} $hiddenNext={i === X_INDEX}>{c}</ColHead>
          ))}
        </SheetRow>
        <SheetRow>
          <RowHead $first>1</RowHead>
          {HEADERS.map((h, i) => (
            <Cell key={i} $spill={i === 18}>{h}</Cell>
          ))}
        </SheetRow>
        {ROWS.map((row, r) => (
          <SheetRow key={r}>
            <RowHead $sel>{r + 2}</RowHead>
            {row.map((v, i) => (
              <Cell
                key={i}
                $sel={i < SELECTED_COLS}
                $right={typeof v === "number" || /\d\/\d/.test(v)}
                $spill={i === 18}
              >
                {v}
              </Cell>
            ))}
            <Cell />
          </SheetRow>
        ))}
        {EMPTY_ROWS.map((n) => (
          <SheetRow key={n}>
            <RowHead>{n}</RowHead>
            {COL_LETTERS.map((_, i) => <Cell key={i} />)}
          </SheetRow>
        ))}
        <HeaderOutline />
        <SelectionOutline />
        <FillHandle />
      </SheetGrid>
      <Gutter />
    </SheetArea>
  );
}

function SortMenu() {
  return (
    <Menu>
      <MenuItem><MenuIcon><SortArrowIcon first="A" /></MenuIcon><span><Mnemonic>S</Mnemonic>ort A to Z</span></MenuItem>
      <MenuItem><MenuIcon><SortArrowIcon first="Z" /></MenuIcon><span>S<Mnemonic>o</Mnemonic>rt Z to A</span></MenuItem>
      <MenuItem><MenuIcon><CustomSortIcon /></MenuIcon><span>C<Mnemonic>u</Mnemonic>stom Sort...</span></MenuItem>
      <MenuItem><MenuIcon><MenuFunnel /></MenuIcon><span><Mnemonic>F</Mnemonic>ilter</span></MenuItem>
      <MenuItem $off><MenuIcon><MenuFunnel color="#c4c4c4" mark="x" /></MenuIcon><span><Mnemonic>C</Mnemonic>lear</span></MenuItem>
      <MenuItem $off><MenuIcon><MenuFunnel color="#c4c4c4" mark="r" /></MenuIcon><span>Reappl<Mnemonic>y</Mnemonic></span></MenuItem>
    </Menu>
  );
}

export default function App() {
  return (
    <Page>
      <GlobalStyle />
      <TitleRow />
      <Tabs />
      <RibbonBar />
      <Formula />
      <Sheet />
      <SortMenu />
      <RedBox $x={1458} $y={71} $w={60} $h={75} />
      <RedBox $x={1468} $y={189} $w={126} $h={33} />
    </Page>
  );
}
